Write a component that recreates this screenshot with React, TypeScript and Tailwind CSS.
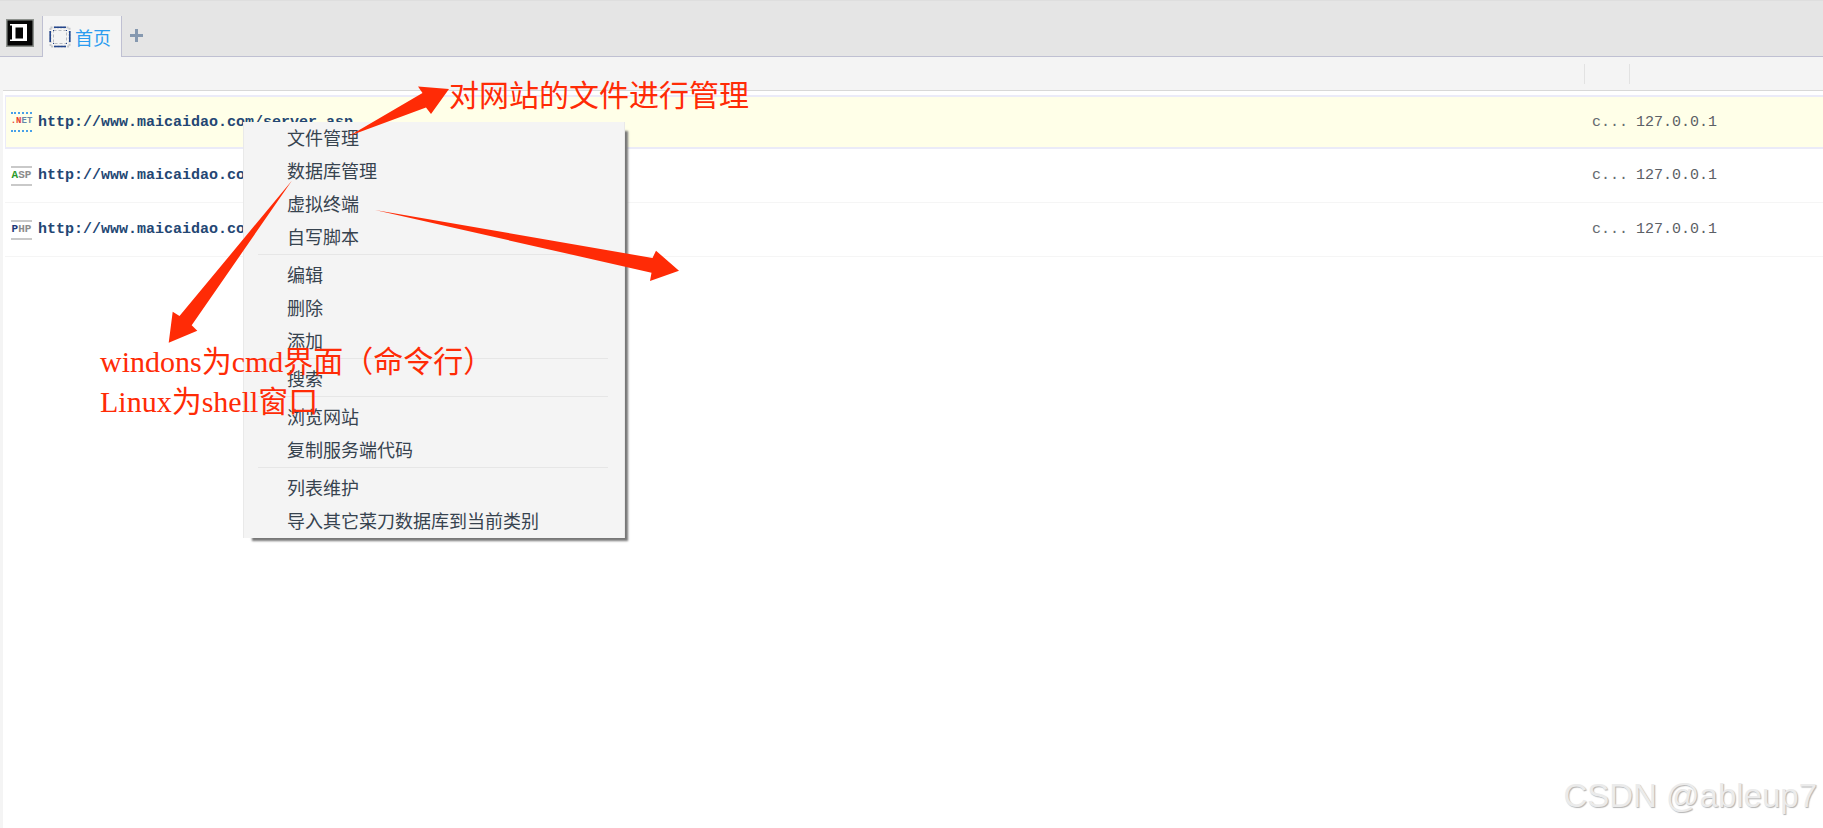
import { useState } from 'react';
import { clsx } from 'clsx';

interface Site {
  id: number;
  kind: 'net' | 'asp' | 'php';
  url: string;
  note: string;
  ip: string;
}

const SITES: Site[] = [
  { id: 1, kind: 'net', url: 'http://www.maicaidao.com/server.asp', note: 'c...', ip: '127.0.0.1' },
  { id: 2, kind: 'asp', url: 'http://www.maicaidao.com', note: 'c...', ip: '127.0.0.1' },
  { id: 3, kind: 'php', url: 'http://www.maicaidao.com', note: 'c...', ip: '127.0.0.1' },
];

const MENU_GROUPS = [
  ['文件管理', '数据库管理', '虚拟终端', '自写脚本'],
  ['编辑', '删除', '添加'],
  ['搜索'],
  ['浏览网站', '复制服务端代码'],
  ['列表维护', '导入其它菜刀数据库到当前类别'],
];

function Logo() {
  return (
    <svg viewBox="0 0 28 28" className="size-7" aria-hidden="true">
      <rect width="28" height="28" fill="#8d918d" />
      <rect x="1.5" y="1.5" width="25" height="25" fill="#050505" />
      <path d="M4 5h17v17H4v-1.500h2V6.500H4z" fill="#fff" />
      <rect x="9.500" y="8.500" width="7.500" height="11" fill="#050505" />
    </svg>
  );
}

function HomeIcon() {
  return (
    <svg viewBox="0 0 22 22" className="size-[22px]" aria-hidden="true" fill="none">
      <rect x="1.5" y="1.5" width="19" height="19" stroke="#c6c8cc" strokeWidth="2" strokeDasharray="2 1.2" />
      <rect x="4.5" y="4.5" width="13" height="13" stroke="#b9bcc2" strokeDasharray="3 2" />
      <path d="M5 1.2h12M5 20.5h12M1.2 5v11M20.8 5v11" stroke="#24468c" strokeWidth="1.6" />
      <path d="M4 5l1-1M17 4l1 1M4 17l1 1M17 18l1-1" stroke="#24468c" />
    </svg>
  );
}

function KindBadge({ kind }: { kind: Site['kind'] }) {
  return (
    <span
      className={clsx(
        'flex h-5 w-[21px] shrink-0 items-center justify-center border-y-2 font-["Liberation_Mono",monospace] font-bold',
        kind === 'net' ? 'border-dotted border-[#48a0e8] text-[9px]' : 'border-[#c9c9c9] text-[11px]',
      )}
    >
      {kind === 'net' && <><span className="text-[#e8402c]">.N</span><span className="text-[#6688aa]">ET</span></>}
      {kind === 'asp' && <><span className="text-[#2a9a2a]">A</span><span className="text-[#8c8c8c]">SP</span></>}
      {kind === 'php' && <><span className="text-[#1d3a7a]">P</span><span className="text-[#8c8c8c]">HP</span></>}
    </span>
  );
}

function ContextMenu() {
  return (
    <div
      role="menu"
      className="absolute left-[243px] top-[122px] w-[382px] border-x border-[#e9e9e9] bg-[#f4f4f4] shadow-[6px_6px_2px_-3px_#777]"
    >
      {MENU_GROUPS.map((group, i) => (
        <div key={i}>
          {i > 0 && <div role="separator" className="mr-4 mb-1 ml-3.5 h-px bg-[#e6e6e6]" />}
          {group.map((label) => (
            <button
              key={label}
              type="button"
              role="menuitem"
              className="block h-[33px] w-full pb-1 pl-[43px] text-left text-lg leading-none text-[#37434f] hover:bg-[#e4e9f0]"
            >
              {label}
            </button>
          ))}
        </div>
      ))}
    </div>
  );
}

function Arrows() {
  return (
    <svg width="700" height="360" viewBox="0 0 700 360" className="pointer-events-none absolute top-0 left-0" fill="#ff2b06" aria-hidden="true">
      <path d="M349 136L422.500 93 418 86.500 449 89 431 114 426 107.500z" />
      <path d="M375 210L652.500 258 656 250.700 679 270.700 650 281 651.500 272.700z" />
      <path d="M292 180.500L179.500 316 172.700 311.700 168.700 342.700 197.300 330.700 191.700 325.300z" />
    </svg>
  );
}

export default function App() {
  const [selected, setSelected] = useState(1);

  return (
    <div className='relative flex min-h-screen flex-col overflow-hidden bg-white font-["Noto_Sans_CJK_SC",sans-serif]'>
      {/* Tab bar */}
      <header className="flex h-[57px] items-end border-t border-[#dedede] bg-[#e5e5e5]">
        <div className="flex h-10 w-[42px] items-start border-b border-[#bfc0d2] pt-0.5 pl-1.5">
          <Logo />
        </div>
        <button type="button" className="flex h-[41px] items-center gap-1 border-x border-[#bfc0d2] bg-[#f4f4f4] pr-2.5 pl-1.5 text-lg leading-none text-[#2a9cf0]">
          <HomeIcon />
          首页
        </button>
        <div className="flex h-10 flex-1 items-start border-b border-[#bfc0d2] pt-3 pl-2">
          <button type="button" aria-label="新建标签">
            <svg viewBox="0 0 13 13" className="size-[13px]" aria-hidden="true">
              <path d="M6.500 0v13M0 6.500h13" stroke="#8699b0" strokeWidth="3" />
            </svg>
          </button>
        </div>
      </header>

      {/* Site list */}
      <main className="flex-1 border-l-3 border-[#f4f4f4]">
        <table className='w-full table-fixed border-separate border-spacing-0 font-["Liberation_Mono","Noto_Sans_CJK_SC",monospace] text-[15px]'>
          <colgroup>
            <col />
            <col className="w-[45px]" />
            <col className="w-[193px]" />
          </colgroup>
          <thead>
            <tr>
              {['url', 'note', 'ip'].map((col) => (
                <th key={col} scope="col" aria-label={col} className="p-0 pb-1">
                  <div className="flex h-[34px] items-center justify-end border-b border-[#d8d8d8] bg-[#f4f4f4]">
                    {col !== 'ip' && <span className="h-5 w-px bg-[#e2e2e2]" />}
                  </div>
                </th>
              ))}
            </tr>
          </thead>
          <tbody>
            {SITES.map((site) => {
              const active = site.id === selected;
              const cell = clsx(
                'flex h-[54px] items-center',
                active ? 'border-y-2 border-[#ebebf8] bg-[#ffffe8]' : 'border-b border-[#f5f5f5]',
              );
              return (
                <tr key={site.id} onClick={() => setSelected(site.id)}>
                  <td className="p-0 pl-0.5">
                    <div className={clsx(cell, 'gap-1.5', active ? 'border-l pl-[5px]' : 'pl-1.5')}>
                      <KindBadge kind={site.kind} />
                      <a href={site.url} onClick={(e) => e.preventDefault()} className="pt-0.5 font-bold text-[#234673]">{site.url}</a>
                    </div>
                  </td>
                  <td className="p-0"><div className={clsx(cell, 'pt-0.5 pl-[7px] text-[#666b70]')}>{site.note}</div></td>
                  <td className="p-0"><div className={clsx(cell, 'pt-0.5 pl-1.5 text-[#5c6066]')}>{site.ip}</div></td>
                </tr>
              );
            })}
          </tbody>
        </table>
      </main>

      <ContextMenu />

      {/* Annotations over the list */}
      <Arrows />
      <p className="pointer-events-none absolute top-[73px] left-[449px] text-[30px] leading-10 text-[#ff2b06]">对网站的文件进行管理</p>
      <div className='pointer-events-none absolute top-[342px] left-[100px] font-["Liberation_Serif","Noto_Sans_CJK_SC",serif] text-[30px] leading-10 text-[#ff2b06]'>
        <p>windons为cmd界面（命令行）</p>
        <p>Linux为shell窗口</p>
      </div>

      <span className='absolute right-1.5 bottom-3 font-["Liberation_Sans",sans-serif] text-[33px] leading-10 text-[#ebebeb] [text-shadow:1px_1px_1px_#b4b4b4]'>
        CSDN @ableup7
      </span>
    </div>
  );
}
